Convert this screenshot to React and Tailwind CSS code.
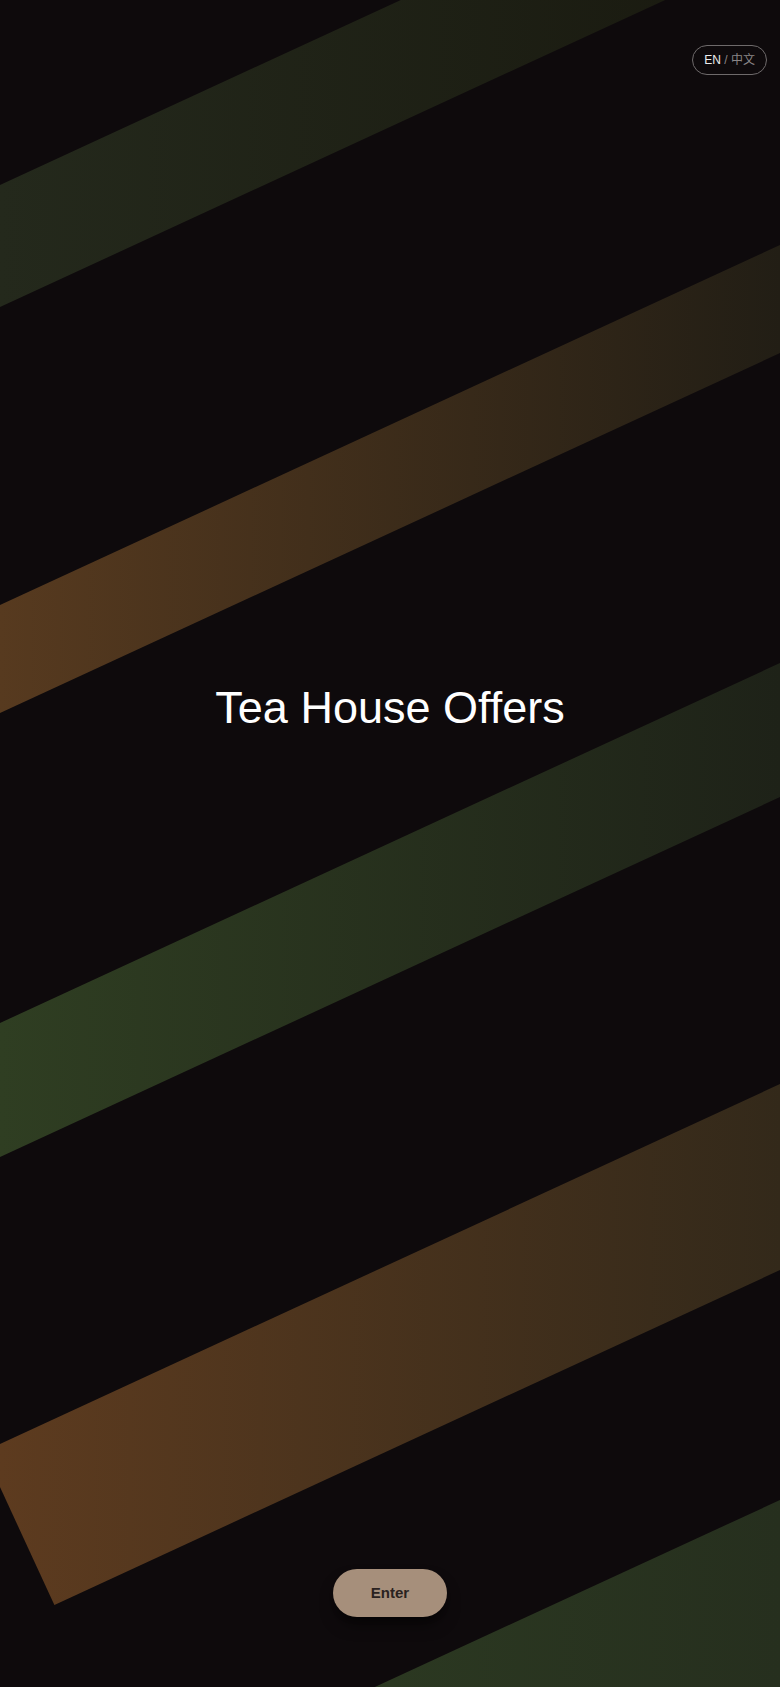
import React from "react";

const bands = [
  { id: "b1", points: "0,185 780,-175 780,-53 0,307", from: "#24291c", to: "#19190f" },
  { id: "b2", points: "0,605 780,245 780,353 0,713", from: "#573a1f", to: "#221e15" },
  { id: "b3", points: "0,1023 780,663 780,797 0,1157", from: "#2f3e22", to: "#1e2218" },
  { id: "b4", points: "-16.4,1451.6 780,1084 780,1270 54.4,1604.9", from: "#5d3b1f", to: "#33291a" },
  { id: "b5", points: "0,1860 780,1500 780,1900 0,1900", from: "#304124", to: "#262f1e" },
];

function Stripes() {
  return (
    <svg
      className="absolute inset-0 w-full h-full"
      viewBox="0 0 780 1687"
      preserveAspectRatio="none"
      aria-hidden="true"
    >
      <defs>
        {bands.map((b) => (
          <linearGradient key={b.id} id={b.id} gradientUnits="userSpaceOnUse" x1="0" y1="0" x2="780" y2="0">
            <stop offset="0" stopColor={b.from} />
            <stop offset="1" stopColor={b.to} />
          </linearGradient>
        ))}
      </defs>
      {bands.map((b) => (
        <polygon key={b.id} points={b.points} fill={`url(#${b.id})`} />
      ))}
    </svg>
  );
}

export default function App() {
  return (
    <div
      className="relative h-screen w-full overflow-hidden bg-[#0e0a0c] flex flex-col"
      style={{ fontFamily: '"Liberation Sans", "Noto Sans CJK SC", Arial, sans-serif' }}
    >
      <Stripes />

      {/* language toggle */}
      <div className="relative flex justify-end pt-[45px] pr-[13px]">
        <button className="h-[30px] px-[11px] rounded-full border border-[#6e6a6b] text-[12px] leading-none flex items-center whitespace-pre">
          <span className="text-[#ececec]">EN</span>
          <span className="text-[#8a8687]"> / 中文</span>
        </button>
      </div>

      {/* title */}
      <h1 className="relative mt-[610px] text-center text-white text-[45px] leading-none font-normal">
        Tea House Offers
      </h1>

      <div className="flex-1" />

      {/* enter */}
      <div className="relative flex justify-center pb-[70px]">
        <button className="w-[114px] h-12 rounded-full bg-[#a68f7b] text-[#2a2220] text-[15px] font-bold shadow-lg shadow-black/50">
          Enter
        </button>
      </div>
    </div>
  );
}
